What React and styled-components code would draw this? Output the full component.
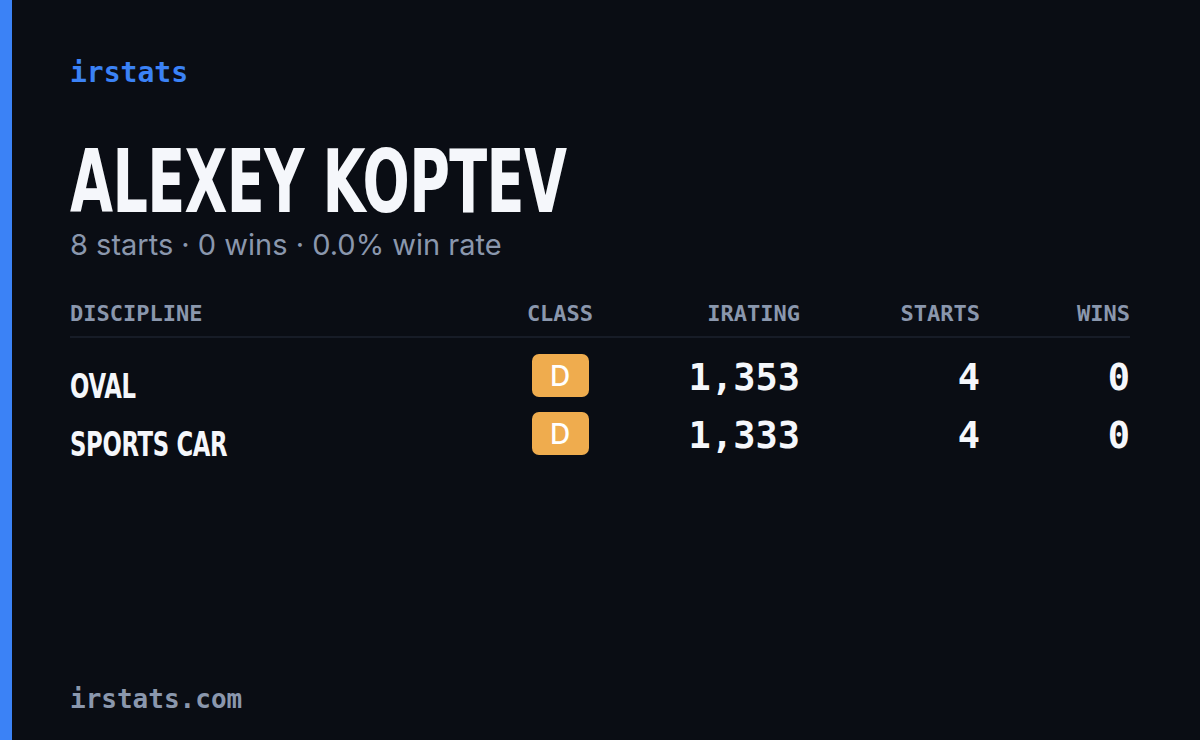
import React from "react";
import styled, { createGlobalStyle } from "styled-components";

const Global = createGlobalStyle`
  html, body { margin: 0; padding: 0; background: #0a0d14; }
  body { width: 1200px; height: 740px; overflow: hidden; }
`;

const Card = styled.div`
  width: 1200px;
  height: 740px;
  display: flex;
  background: #0a0d14;
  box-sizing: border-box;
`;

const Accent = styled.div`
  width: 12px;
  flex: none;
  background: #3b82f6;
`;

const Content = styled.div`
  flex: 1;
  display: flex;
  flex-direction: column;
  padding: 56px 58px 24px 58px;
`;

const Brand = styled.div`
  font-family: "DejaVu Sans Mono", monospace;
  font-size: 28px;
  font-weight: 700;
  color: #3b82f6;
  line-height: 34px;
`;

const Name = styled.h1`
  margin: 57px 0 0 0;
  font-family: "DejaVu Sans", sans-serif;
  font-weight: 700;
  font-size: 88px;
  line-height: 70px;
  height: 70px;
  color: #f5f7fb;
  letter-spacing: -1px;
  white-space: nowrap;
`;

const Squeeze = styled.span`
  display: inline-block;
  transform: scaleX(${(p) => p.$x});
  transform-origin: left center;
`;

const Sub = styled.div`
  font-family: "Inter", sans-serif;
  font-size: 29px;
  line-height: 36px;
  color: #8a97ad;
  margin-top: 10px;
`;

const Table = styled.div`
  margin-top: 39px;
  display: grid;
  grid-template-columns: 450px 80px 200px 180px 150px;
  width: 1060px;
`;

const Head = styled.div`
  font-family: "DejaVu Sans Mono", monospace;
  font-size: 22px;
  line-height: 24px;
  font-weight: 700;
  color: #8a97ad;
  text-align: ${(p) => p.$align || "left"};
  padding-bottom: 10px;
  border-bottom: 2px solid #171c27;
  margin-bottom: 16px;
`;

const Disc = styled.div`
  font-family: "DejaVu Sans", sans-serif;
  font-weight: 700;
  font-size: 33px;
  color: #f5f7fb;
  height: 58px;
  display: flex;
  align-items: flex-end;
  padding-bottom: 6px;
  box-sizing: border-box;
  letter-spacing: -0.5px;
  white-space: nowrap;
`;

const ClassCell = styled.div`
  display: flex;
  justify-content: center;
  align-items: flex-start;
  height: 58px;
  box-sizing: border-box;
`;

const Badge = styled.div`
  width: 57px;
  height: 43px;
  border-radius: 7px;
  background: #efac4e;
  color: #fff;
  font-family: "Inter", sans-serif;
  font-weight: 500;
  font-size: 28px;
  display: flex;
  align-items: center;
  justify-content: center;
`;

const Num = styled.div`
  font-family: "DejaVu Sans Mono", monospace;
  font-size: 37px;
  font-weight: 600;
  color: #f5f7fb;
  text-align: right;
  height: 58px;
  line-height: 48px;
`;

const Spacer = styled.div`
  flex: 1;
`;

const Footer = styled.div`
  font-family: "DejaVu Sans Mono", monospace;
  font-size: 26px;
  font-weight: 700;
  color: #8a97ad;
  line-height: 34px;
`;

const rows = [
  { name: "OVAL", cls: "D", ir: "1,353", starts: 4, wins: 0 },
  { name: "SPORTS CAR", cls: "D", ir: "1,333", starts: 4, wins: 0 },
];

export default function App() {
  return (
    <Card>
      <Global />
      <Accent />
      <Content>
        <Brand>irstats</Brand>
        <Name>
          <Squeeze $x={0.632}>ALEXEY KOPTEV</Squeeze>
        </Name>
        <Sub>8 starts · 0 wins · 0.0% win rate</Sub>
        <Table>
          <Head>DISCIPLINE</Head>
          <Head $align="center">CLASS</Head>
          <Head $align="right">IRATING</Head>
          <Head $align="right">STARTS</Head>
          <Head $align="right">WINS</Head>
          {rows.map((r) => (
            <React.Fragment key={r.name}>
              <Disc>
                <Squeeze $x={0.69}>{r.name}</Squeeze>
              </Disc>
              <ClassCell>
                <Badge>{r.cls}</Badge>
              </ClassCell>
              <Num>{r.ir}</Num>
              <Num>{r.starts}</Num>
              <Num>{r.wins}</Num>
            </React.Fragment>
          ))}
        </Table>
        <Spacer />
        <Footer>irstats.com</Footer>
      </Content>
    </Card>
  );
}
